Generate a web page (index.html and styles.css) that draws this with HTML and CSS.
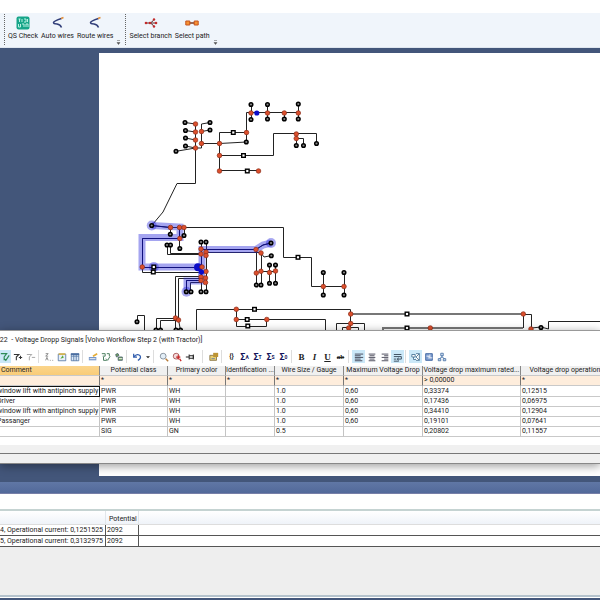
FILE: index.html
```html
<!DOCTYPE html>
<html lang="en">
<head>
<meta charset="utf-8">
<title>Voltage Dropp Signals</title>
<link rel="stylesheet" href="styles.css">
</head>
<body>
<div class="app">
  <header class="ribbon">
    <div class="tool-group">
      <button class="tool"><svg width="14" height="14" viewBox="0 0 14 14"><rect x=".5" y=".5" width="13" height="13" rx="2" fill="#17a589"/><path d="M2.500 3h2M3.500 3v3M6 3v3M8 3h2v3H8M11.500 3v3M2.500 8v3h2V8M6 8h2v3M10 11V8h2v3" fill="none" stroke="#b9f1e2"/></svg>QS Check</button>
      <button class="tool"><svg width="14" height="14" viewBox="0 0 14 14"><path d="M10.500 2.500Q3 5 2.500 6.500Q2.500 8 6 8Q9.500 8.500 10.500 11.500" fill="none" stroke="#303d78" stroke-width="1.500"/><path d="M10 2.500l2.500-1" stroke="#e08b36" stroke-width="1.500"/></svg>Auto wires</button>
      <button class="tool"><svg width="14" height="14" viewBox="0 0 14 14"><path d="M10.500 2.500Q3 5 2.500 6.500Q2.500 8 6 8Q9.500 8.500 10.500 11.500" fill="none" stroke="#303d78" stroke-width="1.500"/><path d="M10 2.500l2.500-1" stroke="#e08b36" stroke-width="1.500"/></svg>Route wires</button>
      <button class="overflow" aria-label="More"><svg width="5" height="5" viewBox="0 0 5 5"><path d="M1 .5h3M1 2.500h3L2.500 4.500z" fill="#555" stroke="#555" stroke-width=".5"/></svg></button>
    </div>
    <div class="tool-group">
      <button class="tool"><svg width="14" height="14" viewBox="0 0 14 14"><path d="M1 7h11M5 7q3 0 5-3.500M5 7q3 0 5 3.500" fill="none" stroke="#5c3030"/><g fill="#c22b2b"><circle cx="2" cy="7" r="1.300"/><circle cx="6" cy="7" r="1.300"/><circle cx="12" cy="7" r="1.300"/><circle cx="10" cy="3.500" r="1.200"/><circle cx="10" cy="10.500" r="1.200"/></g></svg>Select branch</button>
      <button class="tool"><svg width="14" height="14" viewBox="0 0 14 14"><path d="M4 7h6" stroke="#80371a" stroke-width="1.500"/><path d="M.8 5h4v4h-4zM9.200 5h4v4h-4z" fill="#f79232" stroke="#c4521d"/></svg>Select path</button>
      <button class="overflow" aria-label="More"><svg width="5" height="5" viewBox="0 0 5 5"><path d="M1 .5h3M1 2.500h3L2.500 4.500z" fill="#555" stroke="#555" stroke-width=".5"/></svg></button>
    </div>
  </header>

  <main class="workspace">
    <div class="canvas">
      <svg class="diagram" width="501" height="423" viewBox="99 53 501 423" role="img" aria-label="Wiring diagram">
        <defs>
          <circle id="r" r="2.300" fill="#dc4f2c" stroke="#8b2c18" stroke-width=".7"/>
          <circle id="k" r="1.800" fill="#888" stroke="#000" stroke-width="1.500"/>
          <rect id="s" x="-1.800" y="-1.800" width="3.600" height="3.600" fill="#fff" stroke="#000" stroke-width="1.400"/>
        </defs>
        <g class="wire">
          <path d="M185 122.500l10.500 1.500M185.500 130.500l10 1.500M185.500 138l10 2M185.500 146l10 2M176 151.300l19.500-3.300H201.500V124L210 122.500M201.500 131.500l8.500-1.500"/>
          <path d="M195.500 124V183.500H177L163 212L151.700 225.500L170.500 227.500H283.500V257.500H311.500V286.500H344"/>
          <path d="M201.500 143.500H219.500V132.500H246.500M219.500 143.500L246.500 142V112.500H298.500M219.500 143V170.500H258.500M219.500 155.500H273.500V133.500H316.500V143.500M296.500 134V145.500M296.500 138.500H303.500V145.500"/>
          <path d="M251.500 104.500v15M267.500 104.500v15M284.500 113v6M298.500 104v15M323.500 272.500V295M344.500 272.500V295"/>
          <path d="M170.500 227v7M184.500 227v8M179.500 227v21M179.500 238.500H142.500V272.500H202M142.500 267.500H202M167.500 245V254.500H201M170.500 245V253.500H201M201.500 242V292M206.500 242V292"/>
          <path d="M201 249.500H256.500V285M206 252.500H261.500V285M261 271.500H275.500M269.500 265v18M275.500 265v18M256 249.500L263 245L271 243M261 253L264 257L271 255.700"/>
          <path d="M201 276.500H175.500V330M201 278.500H178.500V320L180.500 330M201 280.500H186.500V291.700M201 282.500H190.500V291.700M175.500 318.500H156.500V330M178 320.500H160.500V330M137.500 321.700V315.500H144.500V330"/>
          <path d="M196.500 331V309.500H350.500V328M236.500 309.500V326.500H266.500V319.500M236.500 319.500H325.500V331M336.500 331V323.500H364.500V331M342.500 331V327.500H358.500V331M523.500 314.500H531.500V328L541 327L548.500 329V321.500H600M523.500 314V328"/>
          <path class="trunk" d="M351 314H523M383 331V328H523"/>
        </g>
        <g class="glow">
          <path d="M151.700 225.500L180 227V237.500H142V267H202V249.500H256L263 245L271 243M201.500 267V281H187V291.500"/>
        </g>
        <g class="halo"><circle cx="151.700" cy="225.500" r="5"/><circle cx="271" cy="243" r="5"/><circle cx="186.500" cy="291.700" r="5"/><circle cx="153.800" cy="267" r="5"/></g>
        <path class="core" d="M151.700 225.500L170 227.500M179.500 227.500V238.500H142.500V267.500H201.500V249.500H256L263 245L271 243M201.500 267V280.500H186.500V291.500"/>
        <g fill="#0b0bc8"><circle cx="256.800" cy="113" r="2.600"/><circle cx="198" cy="267.300" r="4"/></g>
        <g>
          <use href="#r" x="195.500" y="124"/><use href="#r" x="195.500" y="132"/><use href="#r" x="195.500" y="140"/><use href="#r" x="195.500" y="148"/><use href="#r" x="201.500" y="131.500"/><use href="#r" x="201.500" y="143.500"/><use href="#r" x="219.500" y="143.500"/><use href="#r" x="219.500" y="155.500"/><use href="#r" x="219.500" y="171"/><use href="#r" x="258.500" y="171"/><use href="#r" x="246.500" y="132.500"/><use href="#r" x="251" y="113"/><use href="#r" x="267.500" y="113"/><use href="#r" x="284.300" y="113"/><use href="#r" x="298.300" y="113"/><use href="#r" x="296.300" y="134"/><use href="#r" x="296.300" y="138.500"/>
          <use href="#r" x="170.500" y="227.500"/><use href="#r" x="179.500" y="227.500"/><use href="#r" x="184" y="227.500"/><use href="#r" x="179.800" y="238.500"/><use href="#r" x="142.300" y="267"/><use href="#r" x="201" y="249"/><use href="#r" x="206" y="252"/><use href="#r" x="201" y="254"/><use href="#r" x="206" y="255.500"/><use href="#r" x="202" y="267"/><use href="#r" x="206" y="271.500"/><use href="#r" x="201" y="277"/><use href="#r" x="205.500" y="278"/><use href="#r" x="201" y="280.500"/><use href="#r" x="205.500" y="282.500"/><use href="#r" x="256" y="249.500"/><use href="#r" x="261" y="253"/><use href="#r" x="256.300" y="273"/><use href="#r" x="261" y="271.300"/><use href="#r" x="269.500" y="272.500"/><use href="#r" x="275.500" y="271"/>
          <use href="#r" x="175.500" y="318"/><use href="#r" x="178.500" y="320"/><use href="#r" x="236.300" y="309.300"/><use href="#r" x="236.300" y="319.500"/><use href="#r" x="266.800" y="319.500"/><use href="#r" x="323.300" y="286.500"/><use href="#r" x="344" y="286.500"/><use href="#r" x="350.700" y="314"/><use href="#r" x="350.700" y="323.500"/><use href="#r" x="348.700" y="328"/><use href="#r" x="523.300" y="314"/><use href="#r" x="430.300" y="328"/><use href="#r" x="531" y="329"/>
        </g>
        <circle cx="201.500" cy="272" r="2.600" fill="#0b0bc8"/>
        <g>
          <use href="#k" x="185" y="122.500"/><use href="#k" x="185.500" y="130.500"/><use href="#k" x="185.500" y="138"/><use href="#k" x="185.500" y="146"/><use href="#k" x="176" y="151.300"/><use href="#k" x="210" y="122.500"/><use href="#k" x="210" y="130"/><use href="#k" x="246.300" y="142"/><use href="#k" x="251" y="104.500"/><use href="#k" x="251" y="119.500"/><use href="#k" x="267.500" y="104.500"/><use href="#k" x="267.500" y="119"/><use href="#k" x="284.300" y="119"/><use href="#k" x="298.300" y="104"/><use href="#k" x="298.300" y="119"/><use href="#k" x="296.300" y="145.500"/><use href="#k" x="303.500" y="145.500"/><use href="#k" x="316.500" y="143.500"/>
          <use href="#k" x="151.700" y="225.500"/><use href="#k" x="170.300" y="234.300"/><use href="#k" x="184" y="235.500"/><use href="#k" x="179.800" y="248.500"/><use href="#k" x="167" y="245"/><use href="#k" x="170.500" y="245"/><use href="#k" x="201" y="242"/><use href="#k" x="206" y="242"/><use href="#k" x="271" y="243"/><use href="#k" x="271.300" y="255.700"/><use href="#k" x="269.500" y="265"/><use href="#k" x="275.500" y="265"/><use href="#k" x="269.500" y="283.300"/><use href="#k" x="275.500" y="283.300"/><use href="#k" x="256.300" y="285"/><use href="#k" x="261" y="285"/><use href="#k" x="323.300" y="272.500"/><use href="#k" x="344" y="272.500"/><use href="#k" x="323.300" y="295"/><use href="#k" x="344" y="295"/>
          <use href="#k" x="201" y="291.700"/><use href="#k" x="206" y="291.700"/><use href="#k" x="186.300" y="291.700"/><use href="#k" x="191" y="291.700"/><use href="#k" x="137" y="321.700"/><use href="#k" x="156" y="330"/><use href="#k" x="160.500" y="330"/><use href="#k" x="176" y="330"/><use href="#k" x="180.500" y="330"/><use href="#k" x="541" y="327.500"/>
        </g>
        <g>
          <use href="#s" x="233.300" y="132.500"/><use href="#s" x="243.500" y="155.500"/><use href="#s" x="247.300" y="171"/><use href="#s" x="153.800" y="267"/><use href="#s" x="153.300" y="272"/><use href="#s" x="298" y="257.300"/><use href="#s" x="254.500" y="309.300"/><use href="#s" x="247.200" y="319.500"/><use href="#s" x="247.800" y="326"/><use href="#s" x="407" y="314"/><use href="#s" x="407" y="328"/>
        </g>
      </svg>
    </div>

    <section class="dialog">
      <h1 class="dialog-title">2022&nbsp; - Voltage Dropp Signals [Volvo Workflow Step 2 (with Tractor)]</h1>
      <div class="iconbar">
        <div class="icons">
          <button class="on" aria-label="Apply filter"><svg viewBox="0 0 12 12"><path d="M1 2h7L5 6v4M5 8l2 2 4-6" fill="none" stroke="#2e8b57" stroke-width="1.400"/></svg></button>
          <button aria-label="Add filter"><svg viewBox="0 0 12 12"><path d="M1 3h6L4 6v4M7 6.500h4M9 4.500v4" fill="none" stroke="#333" stroke-width="1.300"/></svg></button>
          <button aria-label="Remove filter"><svg viewBox="0 0 12 12"><path d="M1 3h6L4 6v4M7 6.500h4" fill="none" stroke="#aaa" stroke-width="1.200"/></svg></button>
        </div>
        <div class="icons">
          <button aria-label="Sort"><svg viewBox="0 0 12 12"><path d="M2 2h3L2 5h3M2 10l1.500-3.500L5 10M7 10h1M10 10h1" fill="none" stroke="#777"/></svg></button>
          <button aria-label="Refresh table"><svg viewBox="0 0 12 12"><path d="M1.500 2.500h9v8h-9z" fill="#e8f0f8" stroke="#5577a5"/><path d="M2 2.500h8" stroke="#d9b44a" stroke-width="2"/><path d="M4 8l3-4 1 3z" fill="#58a83a"/></svg></button>
          <button aria-label="Columns"><svg viewBox="0 0 12 12"><path d="M1.500 2.500h9v8h-9zM4.500 2.500v8M7.500 2.500v8M1.500 5h9" fill="#dce9f7" stroke="#5577a5"/><path d="M1 2.500h10" stroke="#466a9e" stroke-width="2"/></svg></button>
        </div>
        <div class="icons">
          <button aria-label="Edit row"><svg viewBox="0 0 12 12"><path d="M1 6h9v4H1z" fill="#7696c8"/><path d="M2 8h7" stroke="#fff"/><path d="M6 5l5-3" stroke="#e5ad37" stroke-width="2"/></svg></button>
          <button aria-label="Validate"><svg viewBox="0 0 12 12"><path d="M1 2h4v3H2M7 2h3v3M3 6v4h4M6 8l2 2 3-5" fill="none" stroke="#4e8062" stroke-width="1.200"/></svg></button>
          <button aria-label="Export"><svg viewBox="0 0 12 12"><path d="M2 3q3-3 4 1l-3 2zM5 6h5v4H5z" fill="#75a65d" stroke="#4c6070"/><path d="M6 8h4" stroke="#fff"/></svg></button>
        </div>
        <div class="icons">
          <button aria-label="Undo"><svg viewBox="0 0 12 12"><path d="M2 2v4h4M2 6q5-5 8-1 1 3-3 5" fill="none" stroke="#335fae" stroke-width="1.500"/></svg></button>
          <button class="narrow" aria-label="Undo list"><svg viewBox="0 0 12 12"><path d="M3 5h6L6 8z" fill="#222"/></svg></button>
        </div>
        <div class="icons">
          <button aria-label="Find"><svg viewBox="0 0 12 12"><circle cx="5" cy="5" r="3.500" fill="#e3eef7" stroke="#7b8793"/><path d="M8 8l3 3" stroke="#b77a36" stroke-width="1.700"/></svg></button>
          <button aria-label="Find next"><svg viewBox="0 0 12 12"><circle cx="5" cy="5" r="3.500" fill="#f3dada" stroke="#a24c4c"/><path d="M5 6h5M7.500 4v5M9 8l2 3" stroke="#c82626" stroke-width="1.500"/></svg></button>
          <button aria-label="Pin"><svg viewBox="0 0 12 12"><path d="M1 6h4M5 3v6M5 4.500h5v3H5M10 3v6" fill="none" stroke="#222" stroke-width="1.200"/></svg></button>
        </div>
        <div class="icons spaced">
          <button aria-label="Properties"><svg viewBox="0 0 12 12"><path d="M1 4h8v6H1z" fill="#e8cf72" stroke="#857141"/><path d="M5 1h6v5H5z" fill="#bd9434"/><path d="M3 8h4" stroke="#5c77aa"/></svg></button>
        </div>
        <div class="icons">
          <button>{}</button>
          <button class="sum">Σ<small>A</small></button>
          <button class="sum">Σ<small>T</small></button>
          <button class="sum">Σ<small>S</small></button>
          <button class="sum">Σ<small>0</small></button>
        </div>
        <div class="icons serif">
          <button><b>B</b></button>
          <button><i>I</i></button>
          <button><u>U</u></button>
          <button><s>ab</s></button>
        </div>
        <div class="icons">
          <button class="on" aria-label="Align left"><svg viewBox="0 0 12 12"><path d="M1 2.500h10M1 4.500h7M1 6.500h10M1 8.500h7M1 10.500h9" stroke="#334"/></svg></button>
          <button aria-label="Align centre"><svg viewBox="0 0 12 12"><path d="M2 2.500h8M3 4.500h6M2 6.500h8M3 8.500h6M2 10.500h8" stroke="#334"/></svg></button>
          <button aria-label="Align right"><svg viewBox="0 0 12 12"><path d="M2 2.500h8M5 4.500h5M2 6.500h8M5 8.500h5M2 10.500h8" stroke="#334"/></svg></button>
          <button class="on" aria-label="Wrap text"><svg viewBox="0 0 12 12"><path d="M1 3h9M1 5.500h9v3H5M1 8.500h3M7 7L5 8.500 7 10M1 11h6" fill="none" stroke="#456" stroke-width="1.200"/></svg></button>
        </div>
        <div class="icons">
          <button class="on" aria-label="Link view"><svg viewBox="0 0 12 12"><path d="M1 3h4v3H1zM6 2h4v8H6M3 6v3h3M6 6l4-4M6 6l4 4" fill="#fff" stroke="#456f90"/></svg></button>
          <button aria-label="Grid view"><svg viewBox="0 0 12 12"><path d="M2 2h8v8H2z" fill="#7f9ed0" stroke="#345c9b"/><path d="M3 5h3v3M7 3v4h3" fill="none" stroke="#fff"/></svg></button>
          <button aria-label="Hierarchy"><svg viewBox="0 0 12 12"><path d="M6 4v2L3 8M6 6l3 2M4.500 1.500h3v3h-3zM1.500 8h3v2.500h-3zM7.500 8h3v2.500h-3z" fill="#dbe6f5" stroke="#456fa5"/></svg></button>
        </div>
      </div>
      <table class="signals">
        <colgroup><col class="c1"><col class="c2"><col class="c3"><col class="c4"><col class="c5"><col class="c6"><col class="c7"><col class="c8"></colgroup>
        <thead>
          <tr><th class="sorted">Comment</th><th>Potential class</th><th>Primary color</th><th>Identification ...</th><th>Wire Size / Gauge</th><th>Maximum Voltage Drop</th><th>Voltage drop maximum rated...</th><th>Voltage drop operation</th></tr>
          <tr class="filter"><td></td><td>*</td><td>*</td><td>*</td><td>*</td><td>*</td><td>&gt; 0,00000</td><td>*</td></tr>
        </thead>
        <tbody>
          <tr class="first"><td class="current">window lift with antipinch supply</td><td>PWR</td><td>WH</td><td></td><td>1.0</td><td>0,60</td><td>0,33374</td><td>0,12515</td></tr>
          <tr><td>Driver</td><td>PWR</td><td>WH</td><td></td><td>1.0</td><td>0,60</td><td>0,17436</td><td>0,06975</td></tr>
          <tr><td>window lift with antipinch supply</td><td>PWR</td><td>WH</td><td></td><td>1.0</td><td>0,60</td><td>0,34410</td><td>0,12904</td></tr>
          <tr><td>Passanger</td><td>PWR</td><td>WH</td><td></td><td>1.0</td><td>0,60</td><td>0,19101</td><td>0,07641</td></tr>
          <tr><td></td><td>SIG</td><td>GN</td><td></td><td>0.5</td><td></td><td>0,20802</td><td>0,11557</td></tr>
        </tbody>
      </table>
      <div class="scroll-strip"></div>
      <div class="status-strip"></div>
    </section>
  </main>

  <section class="panel">
    <div class="panel-caption"></div>
    <div class="panel-blank"></div>
    <table class="results">
      <colgroup><col class="msg"><col class="pot"><col></colgroup>
      <thead><tr><th></th><th>Potential</th><th></th></tr></thead>
      <tbody>
        <tr><td>4, Operational current: 0,1251525</td><td>2092</td><td></td></tr>
        <tr><td>5, Operational current: 0,3132975</td><td>2092</td><td></td></tr>
      </tbody>
    </table>
  </section>
</div>
</body>
</html>
```
FILE: styles.css
```css
* { box-sizing: border-box; }

body {
  margin: 0;
  font: 7px/10px Roboto, "Noto Sans", sans-serif;
  color: #222;
  background: #43567a;
}

button {
  font: inherit;
  color: inherit;
  border: 0;
  padding: 0;
  background: none;
}

table {
  border-collapse: separate;
  border-spacing: 0;
  table-layout: fixed;
}

.app {
  display: flex;
  flex-direction: column;
  min-height: 100vh;
  overflow: hidden;
}

/* Top ribbon */
.ribbon {
  display: flex;
  gap: 4px;
  height: 48px;
  padding: 14px 4px 0;
  border-bottom: 1px solid #dfe6ef;
  background: linear-gradient(#fff 13px, #f0f5fb 13px);
}

.tool-group {
  display: flex;
  gap: 3px;
  align-items: flex-start;
  height: 31px;
  padding-left: 3px;
  border-left: 1px dotted #666;
}

.tool {
  display: flex;
  flex-direction: column;
  align-items: center;
  gap: 1px;
  padding-top: 2px;
  white-space: nowrap;
}

.overflow {
  align-self: flex-end;
  display: flex;
}

/* Drawing area with the signals dialog over it */
.workspace {
  position: relative;
  padding: 5px 0 6px 99px;
}

.canvas {
  background: #fff;
  overflow: hidden;
}

.diagram { display: block; }
.wire path { fill: none; stroke: #222; stroke-width: 1; }
.wire .trunk { stroke: #777; stroke-width: 2; }
.glow path { fill: none; stroke: #2828dc; stroke-opacity: .42; stroke-width: 7; }
.halo circle { fill: #2828dc; fill-opacity: .4; }
.core { fill: none; stroke: #10107c; stroke-width: 1; }

.dialog {
  position: absolute;
  left: 0;
  right: 0;
  bottom: 18px;
  overflow: hidden;
  border-top: 1px solid #999;
  border-bottom: 1px solid #888;
  background: #fff;
  box-shadow: 0 2px 9px rgba(0, 0, 0, .4);
}

.dialog-title {
  margin: 0 0 0 -8px;
  padding-top: 2px;
  font-size: 7px;
  line-height: 14px;
  font-weight: 400;
  white-space: nowrap;
}

.iconbar {
  display: flex;
  height: 19px;
  margin-left: -2px;
  padding-top: 3px;
}

.icons { display: flex; height: 13px; }

.icons + .icons {
  margin-left: 1px;
  padding-left: 3px;
  border-left: 1px solid #ddd;
}

.icons + .spaced { margin-left: 6px; padding-left: 4px; }

.icons button {
  display: flex;
  align-items: center;
  justify-content: center;
  width: 13px;
  height: 13px;
  font-weight: 700;
}

.icons .narrow { width: 9px; }
.icons svg { width: 10px; height: 10px; }
.icons .narrow svg { width: 8px; }
.icons .on { background: #cbe8f8; }
.icons .sum { font-size: 9px; color: #14145a; }
.icons small { font-size: 5px; }
.serif { font-family: "Liberation Serif", serif; font-size: 9px; }
.serif s { font-size: 7px; }

.signals {
  width: calc(100% + 14px);
  margin-left: -4px;
}

.c1 { width: 104px; }
.c2 { width: 68px; }
.c3 { width: 58px; }
.c4 { width: 49px; }
.c5 { width: 69px; }
.c6 { width: 79px; }
.c7 { width: 98px; }

.signals th,
.signals td {
  height: 10px;
  padding: 0 0 0 1px;
  line-height: 9px;
  overflow: hidden;
  white-space: nowrap;
  border-right: 1px solid #c4c4c4;
  border-bottom: 1px solid #c9c9c9;
}

.signals th {
  font-weight: 400;
  padding: 0;
  text-align: center;
  background: #f0f0f0;
  border-right-color: #888;
}

.signals .sorted {
  padding-left: 5px;
  text-align: left;
  background: linear-gradient(#fbd58c, #f9cc78);
}

.signals .filter td {
  background: #feeddc;
  border-right-color: #777;
}

.signals .first td { height: 11px; }
.signals .first .current { border: 1px solid #111; border-left: 0; }

.scroll-strip {
  height: 17px;
  border-bottom: 1px solid #777;
  background: linear-gradient(#fff 8px, #f0f0f0 8px);
}

.status-strip { height: 9px; background: #f0f0f0; }

/* Lower results panel */
.panel {
  flex: 1;
  margin-bottom: 2px;
  border-bottom: 1px solid #fff;
  background: #eee;
  box-shadow: inset 0 -2px #b4c2cc;
}

.panel-caption {
  height: 12px;
  border-bottom: 1px solid #777fa8;
  background: linear-gradient(#6077a5, #52699a);
}

.panel-blank {
  height: 17px;
  border-bottom: 2px solid #c5d3d2;
  background: #fff;
}

.results { width: 100%; background: #fff; }
.results .msg { width: 106px; }
.results .pot { width: 33px; }

.results th {
  height: 14px;
  padding: 2px 0 0 3px;
  font-weight: 400;
  text-align: left;
  border-right: 1px solid #e2e6ea;
  border-bottom: 1px solid #ddd;
  background: linear-gradient(#fff, #eff3f9);
}

.results td {
  height: 11px;
  padding: 0 0 0 1px;
  white-space: nowrap;
  border-right: 1px solid #555;
  border-bottom: 1px solid #555;
}

.results td:first-child { padding: 0; }

.results th:last-child,
.results td:last-child { border-right: 0; }
```
